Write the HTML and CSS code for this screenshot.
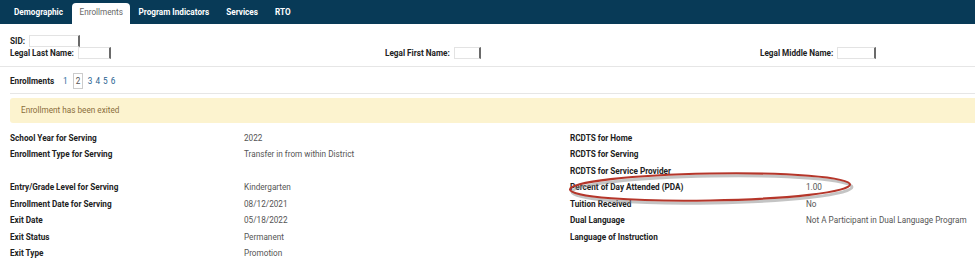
FILE: index.html
```html
<!DOCTYPE html>
<html>
<head>
<meta charset="utf-8">
<link rel="stylesheet" href="styles.css">
</head>
<body>
<nav class="tabs">
  <span class="tab">Demographic</span>
  <span class="tab active">Enrollments</span>
  <span class="tab">Program Indicators</span>
  <span class="tab">Services</span>
  <span class="tab">RTO</span>
</nav>
<section class="ident">
  <div class="field sid"><b>SID:</b><span class="input w51"></span></div>
  <div class="names">
    <div class="field"><b>Legal Last Name:</b><span class="input w33"></span></div>
    <div class="field first"><b>Legal First Name:</b><span class="input w27"></span></div>
    <div class="field middle"><b>Legal Middle Name:</b><span class="input w39"></span></div>
  </div>
</section>
<div class="pager">
  <b>Enrollments</b>
  <span class="pg plain">1</span>
  <span class="pg current">2</span>
  <span class="pg link">3</span>
  <span class="pg link">4</span>
  <span class="pg link">5</span>
  <span class="pg link">6</span>
</div>
<div class="alert">Enrollment has been exited</div>
<div class="details">
  <div class="lbl">School Year for Serving</div><div class="val">2022</div>
  <div class="lbl">RCDTS for Home</div><div class="val"></div>

  <div class="lbl">Enrollment Type for Serving</div><div class="val">Transfer in from within District</div>
  <div class="lbl">RCDTS for Serving</div><div class="val"></div>

  <div class="lbl"></div><div class="val"></div>
  <div class="lbl">RCDTS for Service Provider</div><div class="val"></div>

  <div class="lbl">Entry/Grade Level for Serving</div><div class="val">Kindergarten</div>
  <div class="lbl pda">Percent of Day Attended (PDA)
    <svg class="circle" width="300" height="40" viewBox="0 0 300 40">
      <ellipse cx="150" cy="20" rx="140" ry="13.5" fill="none" stroke="#8a8a8a" stroke-width="3" opacity="0.5" transform="translate(2 2.5) rotate(-1 150 20)"/>
      <ellipse cx="150" cy="20" rx="140" ry="13.5" fill="none" stroke="#b5362a" stroke-width="2.2" transform="rotate(-1 150 20)"/>
    </svg>
  </div><div class="val">1.00</div>

  <div class="lbl">Enrollment Date for Serving</div><div class="val">08/12/2021</div>
  <div class="lbl">Tuition Received</div><div class="val">No</div>

  <div class="lbl">Exit Date</div><div class="val">05/18/2022</div>
  <div class="lbl">Dual Language</div><div class="val">Not A Participant in Dual Language Program</div>

  <div class="lbl">Exit Status</div><div class="val">Permanent</div>
  <div class="lbl">Language of Instruction</div><div class="val"></div>

  <div class="lbl">Exit Type</div><div class="val">Promotion</div>
  <div class="lbl"></div><div class="val"></div>
</div>
</body>
</html>
```
FILE: styles.css
```css
html, body {
  margin: 0;
  padding: 0;
  background: #fff;
}
body {
  font-family: Roboto, "Liberation Sans", sans-serif;
  font-size: 8.2px;
  color: #222;
  width: 975px;
  overflow: hidden;
}
b { font-weight: 700; }

.tabs {
  background: #083a57;
  height: 24px;
  display: flex;
  align-items: flex-end;
  padding-left: 5.5px;
}
.tab {
  color: #fff;
  font-weight: 700;
  height: 21px;
  line-height: 19px;
  padding: 0 8.5px;
}
.tab.active {
  background: #fff;
  color: #666;
  font-weight: 400;
  border-radius: 4px 4px 0 0;
  padding: 0 7px 0 8px;
}

.ident {
  padding: 10px 0 0 10px;
  border-bottom: 1px solid #e6e6e6;
  box-sizing: border-box;
  height: 43px;
}
.field {
  display: flex;
  align-items: center;
  gap: 4px;
  height: 12px;
}
.sid { height: 13px; }
.names { display: flex; }
.names .field:nth-child(1) { width: 375px; }
.names .field.first { width: 375px; }
.input {
  display: inline-block;
  height: 12px;
  box-sizing: border-box;
  border: 1px solid #e3e3e3;
  border-right: 2px solid #6a6a6a;
  background: #fff;
}
.w51 { width: 51px; }
.w33 { width: 33px; }
.w27 { width: 27px; }
.w39 { width: 39px; }

.pager {
  display: flex;
  align-items: center;
  margin-left: 10px;
  height: 27px;
  padding-top: 2px;
  border-bottom: 1px solid #e6e6e6;
  box-sizing: border-box;
}
.pager b { margin-right: 7px; }
.pg { padding: 0 2px; }
.pg.plain { color: #2a6e9e; margin-right: 3px; }
.pg.current {
  border: 1px solid #ccc;
  color: #555;
  padding: 2px 2px;
  margin-right: 3px;
}
.pg.link { color: #1f5f90; padding: 0 1.5px; }

.alert {
  margin: 4px 0 0 10px;
  background: #fcf3cf;
  color: #8a6d3b;
  height: 25px;
  line-height: 25px;
  padding-left: 11px;
  border-radius: 3px 0 0 3px;
}

.details {
  display: grid;
  grid-template-columns: 234px 326px 236px 1fr;
  grid-auto-rows: 16.43px;
  padding: 7px 0 0 10px;
  line-height: 16.43px;
}
.lbl {
  font-weight: 700;
  color: #222;
  white-space: nowrap;
}
.val {
  color: #555;
  white-space: nowrap;
}
.pda { position: relative; }
.circle {
  position: absolute;
  left: -10px;
  top: -12px;
  pointer-events: none;
}
```
